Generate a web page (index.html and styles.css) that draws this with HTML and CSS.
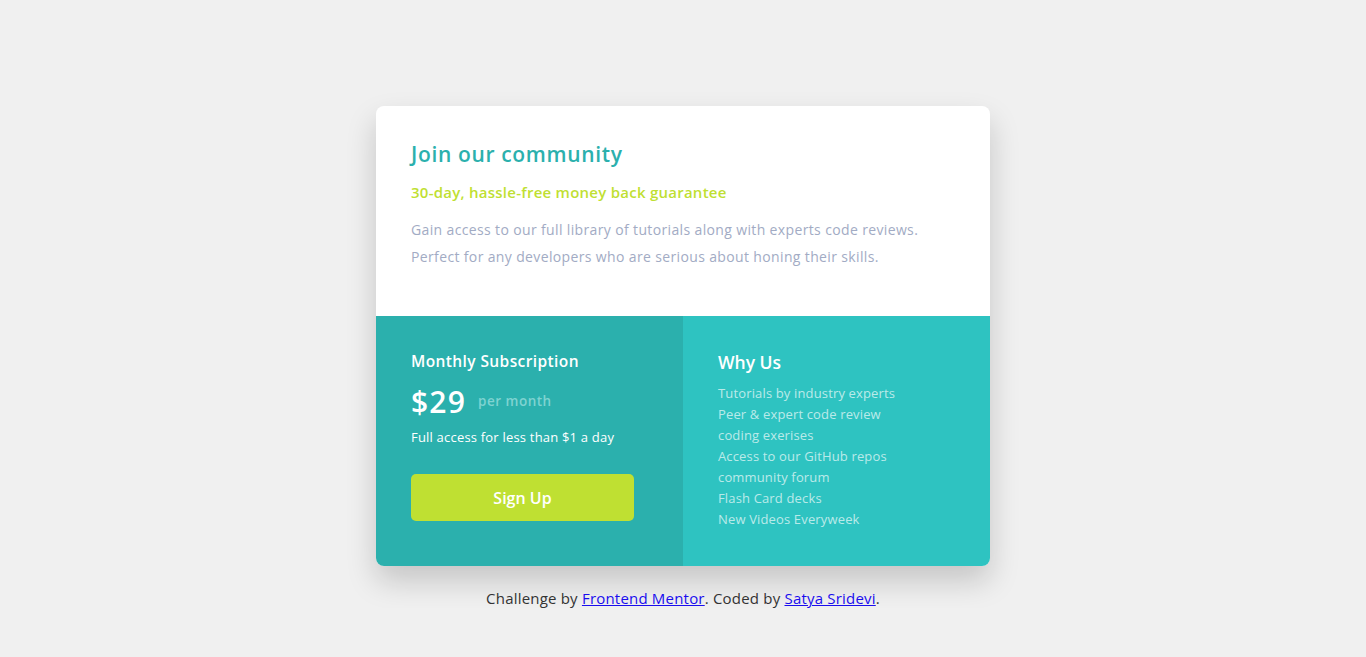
FILE: index.html
```html
<!DOCTYPE html>
<html lang="en">
<head>
<meta charset="utf-8">
<title>Single price grid</title>
<link rel="stylesheet" href="styles.css">
</head>
<body>
<main class="page">
  <section class="card">
    <div class="top">
      <h1 class="title">Join our community</h1>
      <h2 class="guarantee">30-day, hassle-free money back guarantee</h2>
      <p class="desc">Gain access to our full library of tutorials along with experts code reviews. Perfect for any developers who are serious about honing their skills.</p>
    </div>
    <div class="bottom">
      <div class="sub">
        <h3 class="sub-title">Monthly Subscription</h3>
        <div class="price-row"><span class="price">$29</span><span class="per">per month</span></div>
        <p class="sub-note">Full access for less than $1 a day</p>
        <button class="btn">Sign Up</button>
      </div>
      <div class="why">
        <h3 class="why-title">Why Us</h3>
        <ul class="why-list">
          <li>Tutorials by industry experts</li>
          <li>Peer &amp; expert code review</li>
          <li>coding exerises</li>
          <li>Access to our GitHub repos</li>
          <li>community forum</li>
          <li>Flash Card decks</li>
          <li>New Videos Everyweek</li>
        </ul>
      </div>
    </div>
  </section>
  <p class="attribution">Challenge by <a href="#">Frontend Mentor</a>. Coded by <a href="#">Satya Sridevi</a>.</p>
</main>
</body>
</html>
```
FILE: styles.css
```css
* { box-sizing: border-box; }
html, body { margin: 0; padding: 0; }
body {
  background: #f0f0f0;
  font-family: "Open Sans", Lato, "Liberation Sans", sans-serif;
}
.page {
  display: flex;
  flex-direction: column;
  align-items: center;
  padding-top: 106px;
}
.card {
  width: 614px;
  border-radius: 8px;
  overflow: hidden;
  background: #fff;
  box-shadow: 0 15px 30px rgba(0, 0, 0, 0.18);
}
.top {
  height: 210px;
  padding: 35px 35px 0;
}
.title {
  margin: 0;
  font-size: 21px;
  line-height: 26px;
  font-weight: 600;
  color: #2bb0ad;
  letter-spacing: 0.65px;
}
.guarantee {
  margin: 15px 0 0;
  font-size: 15px;
  line-height: 20px;
  font-weight: 600;
  color: #bfdf32;
  letter-spacing: 0.25px;
}
.desc {
  margin: 14px 0 0;
  font-size: 14px;
  line-height: 27px;
  color: #a2abc4;
  letter-spacing: 0.36px;
  width: 540px;
}
.bottom {
  display: flex;
  height: 250px;
}
.sub {
  flex: 0 0 307px;
  background: #2bb0ad;
  padding: 35px 35px 0;
  color: #fff;
}
.sub-title {
  margin: 0;
  font-size: 15.5px;
  line-height: 20px;
  font-weight: 600;
  letter-spacing: 0.4px;
}
.price-row {
  display: flex;
  align-items: center;
  gap: 12px;
  margin-top: 12px;
  height: 36px;
}
.price {
  font-size: 30px;
  font-weight: 600;
  letter-spacing: 1.2px;
}
.per {
  font-size: 13.5px;
  font-weight: 600;
  color: #7fd3d1;
  letter-spacing: 0.5px;
}
.sub-note {
  margin: 9px 0 0;
  font-size: 13px;
  line-height: 18px;
  letter-spacing: 0.2px;
}
.btn {
  display: block;
  margin-top: 28px;
  width: 223px;
  height: 47px;
  border: 0;
  border-radius: 5px;
  background: #bfe032;
  color: #fff;
  font-family: inherit;
  font-size: 16px;
  font-weight: 600;
}
.why {
  flex: 1;
  background: #2ec3c1;
  padding: 35px 35px 0;
  color: #fff;
}
.why-title {
  margin: 0;
  font-size: 17.5px;
  line-height: 22px;
  font-weight: 600;
}
.why-list {
  list-style: none;
  margin: 10px 0 0;
  padding: 0;
  font-size: 13px;
  line-height: 21px;
  letter-spacing: 0.15px;
  color: rgba(255, 255, 255, 0.68);
}
.attribution {
  margin: 22px 0 0;
  font-size: 15px;
  line-height: 20px;
  letter-spacing: 0.2px;
  color: #333;
}
.attribution a { color: #1a0dee; }
```
